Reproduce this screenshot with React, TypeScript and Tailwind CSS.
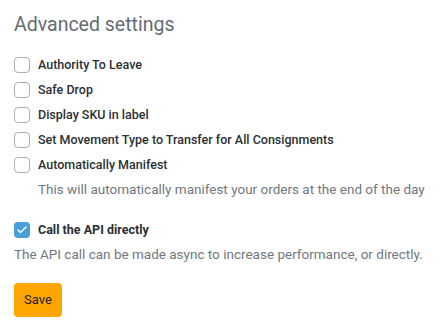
import { Check } from "lucide-react";

type Option = {
  label: string;
  checked?: boolean;
  hint?: string;
};

const options: Option[] = [
  { label: "Authority To Leave" },
  { label: "Safe Drop" },
  { label: "Display SKU in label" },
  { label: "Set Movement Type to Transfer for All Consignments" },
  {
    label: "Automatically Manifest",
    hint: "This will automatically manifest your orders at the end of the day",
  },
];

function Box({ checked }: { checked?: boolean }) {
  return checked ? (
    <span className="flex h-4 w-4 shrink-0 items-center justify-center rounded-[4px] bg-[#4a9fd8]">
      <Check className="h-3 w-3 text-white" strokeWidth={3} />
    </span>
  ) : (
    <span className="h-4 w-4 shrink-0 rounded-[4px] border border-[#a9b0b6] bg-white" />
  );
}

export default function App() {
  return (
    <div className="min-h-screen bg-white px-[14px] pt-[11px] font-['Roboto',sans-serif] text-[#343a40]">
      <h2 className="text-[19.5px] leading-[28px] text-[#646d74]">Advanced settings</h2>

      <div className="mt-[18px] flex flex-col gap-[9px]">
        {options.map((o) => (
          <div key={o.label}>
            <label className="flex items-center gap-2">
              <Box checked={o.checked} />
              <span className="text-[12.5px] leading-4 font-medium text-[#2b3035]">{o.label}</span>
            </label>
            {o.hint && (
              <p className="mt-[8px] pl-6 text-[13.5px] leading-4 text-[#707880]">{o.hint}</p>
            )}
          </div>
        ))}
      </div>

      <label className="mt-[25px] flex items-center gap-2">
        <Box checked />
        <span className="text-[12.5px] leading-4 font-bold text-[#2b3035]">Call the API directly</span>
      </label>
      <p className="mt-[8px] text-[13.5px] leading-4 text-[#707880]">
        The API call can be made async to increase performance, or directly.
      </p>

      <button className="mt-[21px] h-[34px] rounded-[4px] bg-[#ffa500] px-[10px] text-[13px] text-[#222]">
        Save
      </button>
    </div>
  );
}
